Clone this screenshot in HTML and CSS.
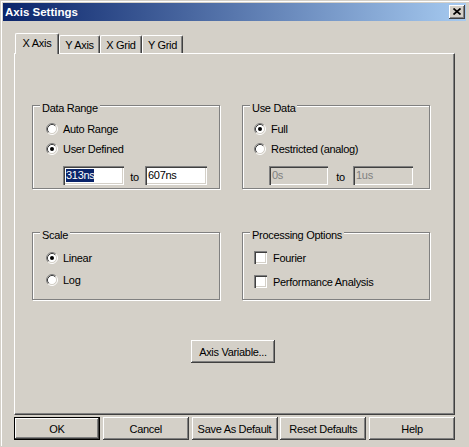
FILE: index.html
```html
<!DOCTYPE html>
<html>
<head>
<meta charset="utf-8">
<link rel="stylesheet" href="styles.css">
</head>
<body>
<div class="window">
  <div class="frame">
    <div class="titlebar">
      <span class="title">Axis Settings</span>
      <div class="close">
        <svg width="8" height="7" viewBox="0 0 8 7"><path d="M0.5 0.5 L7.5 6.5 M7.5 0.5 L0.5 6.5" stroke="#000" stroke-width="1.7" fill="none"/></svg>
      </div>
    </div>
    <div class="client">
      <div class="tabs">
        <div class="tab active tab-44">X Axis</div>
        <div class="tab tab-41">Y Axis</div>
        <div class="tab tab-42">X Grid</div>
        <div class="tab tab-41">Y Grid</div>
      </div>
      <div class="panel">
        <div class="groups">
          <div class="group left top-17">
            <span class="legend">Data Range</span>
            <div class="opts gap-8">
              <div class="opt">
                <svg class="radio" width="12" height="12" viewBox="0 0 12 12"><circle cx="6" cy="6" r="4.5" fill="#fff"/><path d="M2.11 9.89 A5.5 5.5 0 0 1 9.89 2.11" stroke="#808080" fill="none"/><path d="M9.89 2.11 A5.5 5.5 0 0 1 2.11 9.89" stroke="#fff" fill="none"/><path d="M2.82 9.18 A4.5 4.5 0 0 1 9.18 2.82" stroke="#404040" fill="none"/><path d="M9.18 2.82 A4.5 4.5 0 0 1 2.82 9.18" stroke="#d4d0c8" fill="none"/></svg>
                <span>Auto Range</span>
              </div>
              <div class="opt">
                <svg class="radio" width="12" height="12" viewBox="0 0 12 12"><circle cx="6" cy="6" r="4.5" fill="#fff"/><path d="M2.11 9.89 A5.5 5.5 0 0 1 9.89 2.11" stroke="#808080" fill="none"/><path d="M9.89 2.11 A5.5 5.5 0 0 1 2.11 9.89" stroke="#fff" fill="none"/><path d="M2.82 9.18 A4.5 4.5 0 0 1 9.18 2.82" stroke="#404040" fill="none"/><path d="M9.18 2.82 A4.5 4.5 0 0 1 2.82 9.18" stroke="#d4d0c8" fill="none"/><circle cx="6" cy="6" r="2" fill="#000"/></svg>
                <span>User Defined</span>
              </div>
            </div>
            <div class="range range-17">
              <div class="edit w61"><span class="sel">313ns</span></div>
              <span class="to to-21">to</span>
              <div class="edit w62"><span>607ns</span></div>
            </div>
          </div>

          <div class="group right top-17">
            <span class="legend">Use Data</span>
            <div class="opts gap-8">
              <div class="opt">
                <svg class="radio" width="12" height="12" viewBox="0 0 12 12"><circle cx="6" cy="6" r="4.5" fill="#fff"/><path d="M2.11 9.89 A5.5 5.5 0 0 1 9.89 2.11" stroke="#808080" fill="none"/><path d="M9.89 2.11 A5.5 5.5 0 0 1 2.11 9.89" stroke="#fff" fill="none"/><path d="M2.82 9.18 A4.5 4.5 0 0 1 9.18 2.82" stroke="#404040" fill="none"/><path d="M9.18 2.82 A4.5 4.5 0 0 1 2.82 9.18" stroke="#d4d0c8" fill="none"/><circle cx="6" cy="6" r="2" fill="#000"/></svg>
                <span>Full</span>
              </div>
              <div class="opt">
                <svg class="radio" width="12" height="12" viewBox="0 0 12 12"><circle cx="6" cy="6" r="4.5" fill="#fff"/><path d="M2.11 9.89 A5.5 5.5 0 0 1 9.89 2.11" stroke="#808080" fill="none"/><path d="M9.89 2.11 A5.5 5.5 0 0 1 2.11 9.89" stroke="#fff" fill="none"/><path d="M2.82 9.18 A4.5 4.5 0 0 1 9.18 2.82" stroke="#404040" fill="none"/><path d="M9.18 2.82 A4.5 4.5 0 0 1 2.82 9.18" stroke="#d4d0c8" fill="none"/></svg>
                <span>Restricted (analog)</span>
              </div>
            </div>
            <div class="range range-15">
              <div class="edit w59 disabled"><span>0s</span></div>
              <span class="to to-25">to</span>
              <div class="edit w60 disabled"><span>1us</span></div>
            </div>
          </div>

          <div class="group left top-19">
            <span class="legend">Scale</span>
            <div class="opts gap-10">
              <div class="opt">
                <svg class="radio" width="12" height="12" viewBox="0 0 12 12"><circle cx="6" cy="6" r="4.5" fill="#fff"/><path d="M2.11 9.89 A5.5 5.5 0 0 1 9.89 2.11" stroke="#808080" fill="none"/><path d="M9.89 2.11 A5.5 5.5 0 0 1 2.11 9.89" stroke="#fff" fill="none"/><path d="M2.82 9.18 A4.5 4.5 0 0 1 9.18 2.82" stroke="#404040" fill="none"/><path d="M9.18 2.82 A4.5 4.5 0 0 1 2.82 9.18" stroke="#d4d0c8" fill="none"/><circle cx="6" cy="6" r="2" fill="#000"/></svg>
                <span>Linear</span>
              </div>
              <div class="opt">
                <svg class="radio" width="12" height="12" viewBox="0 0 12 12"><circle cx="6" cy="6" r="4.5" fill="#fff"/><path d="M2.11 9.89 A5.5 5.5 0 0 1 9.89 2.11" stroke="#808080" fill="none"/><path d="M9.89 2.11 A5.5 5.5 0 0 1 2.11 9.89" stroke="#fff" fill="none"/><path d="M2.82 9.18 A4.5 4.5 0 0 1 9.18 2.82" stroke="#404040" fill="none"/><path d="M9.18 2.82 A4.5 4.5 0 0 1 2.82 9.18" stroke="#d4d0c8" fill="none"/></svg>
                <span>Log</span>
              </div>
            </div>
          </div>

          <div class="group right top-18">
            <span class="legend">Processing Options</span>
            <div class="opts gap-11">
              <div class="opt chk-row">
                <div class="check"></div>
                <span>Fourier</span>
              </div>
              <div class="opt chk-row">
                <div class="check"></div>
                <span>Performance Analysis</span>
              </div>
            </div>
          </div>
        </div>
        <div class="btn-row">
          <div class="btn axis-btn">Axis Variable...</div>
        </div>
      </div>
      <div class="footer">
        <div class="btn fbtn default">OK</div>
        <div class="btn fbtn">Cancel</div>
        <div class="btn fbtn">Save As Default</div>
        <div class="btn fbtn">Reset Defaults</div>
        <div class="btn fbtn">Help</div>
      </div>
    </div>
  </div>
</div>
</body>
</html>
```

FILE: styles.css
```css
html, body {
  margin: 0;
  padding: 0;
}
body {
  width: 469px;
  height: 447px;
  overflow: hidden;
  background: #d4d0c8;
  font-family: "Liberation Sans", Arial, sans-serif;
  font-size: 11px;
  letter-spacing: -0.3px;
  color: #000;
}
.window {
  padding: 1px 0 0 1px;
  height: 446px;
  box-sizing: border-box;
}
.frame {
  border-left: 1px solid #fff;
  border-top: 1px solid #fff;
  padding: 1px 0 0 1px;
  height: 100%;
  box-sizing: border-box;
}
.titlebar {
  width: 463px;
  height: 18px;
  box-sizing: border-box;
  padding: 0 1px 0 2px;
  display: flex;
  align-items: center;
  justify-content: space-between;
  background: linear-gradient(to right, #0a246a, #a6caf0);
}
.title {
  color: #fff;
  font-weight: bold;
  font-size: 11.5px;
  letter-spacing: 0;
  line-height: 14px;
}
.close {
  width: 16px;
  height: 14px;
  box-sizing: border-box;
  background: #d4d0c8;
  box-shadow: inset -1px -1px 0 #404040, inset 1px 1px 0 #fff, inset -2px -2px 0 #808080, inset 2px 2px 0 #d4d0c8;
  display: flex;
  align-items: center;
  justify-content: center;
  padding-bottom: 1px;
}
.close svg {
  display: block;
}
.client {
  padding: 12px 0 0 11px;
}
.tabs {
  display: flex;
  align-items: flex-end;
  height: 20px;
  margin-left: 1px;
}
.tab {
  height: 18px;
  box-sizing: border-box;
  border-left: 1px solid #fff;
  border-top: 1px solid #fff;
  border-right: 1px solid #404040;
  border-radius: 2px 2px 0 0;
  box-shadow: inset -1px 0 0 #808080;
  text-align: center;
  line-height: 16px;
  padding-top: 1px;
  background: #d4d0c8;
}
.tab.active {
  height: 21px;
  margin-bottom: -1px;
  position: relative;
  z-index: 1;
  line-height: 16px;
  padding-top: 1px;
}
.tab-44 { width: 44px; }
.tab-41 { width: 41px; }
.tab-42 { width: 42px; }
.panel {
  width: 441px;
  height: 362px;
  box-sizing: border-box;
  border-left: 1px solid #fff;
  border-top: 1px solid #fff;
  border-right: 1px solid #404040;
  border-bottom: 1px solid #404040;
  box-shadow: inset -1px -1px 0 #808080;
  padding: 51px 0 0 17px;
}
.groups {
  display: grid;
  grid-template-columns: 188px 188px;
  grid-template-rows: 84px 68px;
  column-gap: 22px;
  row-gap: 43px;
}
.group {
  position: relative;
  box-sizing: border-box;
  border: 1px solid #808080;
  box-shadow: inset 1px 1px 0 #fff, 1px 1px 0 #fff;
}
.group.left { padding-left: 13px; }
.group.right { padding-left: 11px; }
.top-17 { padding-top: 17px; }
.top-18 { padding-top: 18px; }
.top-19 { padding-top: 19px; }
.legend {
  position: absolute;
  top: -4px;
  left: 7px;
  padding: 0 2px;
  background: #d4d0c8;
  line-height: 13px;
}
.opts {
  display: flex;
  flex-direction: column;
}
.gap-8 { gap: 8px; }
.gap-10 { gap: 10px; }
.gap-11 { gap: 11px; }
.opt {
  display: flex;
  align-items: center;
  height: 12px;
  line-height: 12px;
  white-space: nowrap;
}
.opt.chk-row {
  height: 13px;
}
.radio {
  display: block;
  flex: none;
  margin-right: 5px;
}
.check {
  width: 13px;
  height: 13px;
  flex: none;
  box-sizing: border-box;
  background: #fff;
  box-shadow: inset 1px 1px 0 #808080, inset 2px 2px 0 #404040, inset -1px -1px 0 #fff, inset -2px -2px 0 #d4d0c8;
  margin-right: 6px;
}
.range {
  display: flex;
  align-items: center;
  margin-top: 11px;
}
.range-17 { margin-left: 17px; }
.range-15 { margin-left: 15px; }
.edit {
  height: 19px;
  box-sizing: border-box;
  background: #fff;
  box-shadow: inset 1px 1px 0 #808080, inset 2px 2px 0 #404040, inset -1px -1px 0 #fff, inset -2px -2px 0 #d4d0c8;
  display: flex;
  align-items: center;
  padding: 0 0 0 3px;
  line-height: 13px;
}
.edit.disabled {
  background: #d4d0c8;
  color: #808080;
}
.w59 { width: 59px; }
.w60 { width: 60px; }
.w61 { width: 61px; }
.w62 { width: 62px; }
.sel {
  background: #0a246a;
  color: #fff;
}
.to {
  text-align: center;
  line-height: 13px;
  padding-top: 3px;
}
.to-21 { width: 21px; }
.to-25 { width: 25px; }
.btn-row {
  margin-top: 40px;
  padding-left: 159px;
}
.btn {
  height: 23px;
  box-sizing: border-box;
  background: #d4d0c8;
  box-shadow: inset -1px -1px 0 #404040, inset 1px 1px 0 #fff, inset -2px -2px 0 #808080, inset 2px 2px 0 #d4d0c8;
  display: flex;
  align-items: center;
  justify-content: center;
  white-space: nowrap;
}
.axis-btn {
  width: 84px;
}
.footer {
  display: flex;
  justify-content: space-between;
  width: 441px;
  margin-top: 2px;
}
.fbtn {
  width: 86px;
}
.fbtn.default {
  border: 1px solid #000;
}
```
